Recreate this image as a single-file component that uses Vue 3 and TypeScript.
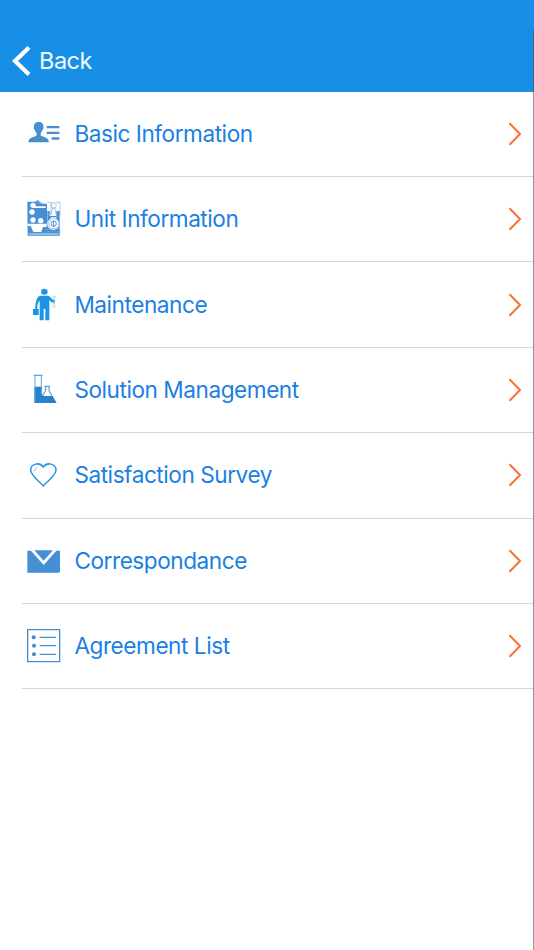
<script setup lang="ts">
interface MenuItem {
  icon: string
  label: string
  viewBox: string
}

const items: MenuItem[] = [
  { icon: 'person', label: 'Basic Information', viewBox: '21 6 132 132' },
  { icon: 'unit', label: 'Unit Information', viewBox: '21 22 132 132' },
  { icon: 'worker', label: 'Maintenance', viewBox: '21 8 132 132' },
  { icon: 'flask', label: 'Solution Management', viewBox: '21 9 132 132' },
  { icon: 'heart', label: 'Satisfaction Survey', viewBox: '21 10 132 132' },
  { icon: 'mail', label: 'Correspondance', viewBox: '21 -4 132 132' },
  { icon: 'list', label: 'Agreement List', viewBox: '21 12 132 132' },
]
</script>

<template>
  <div class="screen">
    <header class="bar">
      <button class="back" type="button">
        <svg class="back-icon" viewBox="0 0 20 32"><path d="M18 2.5 4 16l14 13.5" /></svg>
        <span>Back</span>
      </button>
    </header>
    <nav class="menu">
      <a v-for="item in items" :key="item.label" class="row">
        <svg class="icon" :viewBox="item.viewBox">
          <g v-if="item.icon === 'person'" fill="#478fcf">
            <path d="M71 36c-10 0-15 6-14 15-2 2 0 8 3 9 1 5 3 8 5 10v6c-7 6-24 5-25 21h62c-1-16-18-15-25-21v-6c2-2 4-5 5-10 3-1 5-7 3-9 1-9-4-15-14-15z" />
            <path d="M95 48h38v7H95zM95 65h38v7H95zM110 82h23v7h-23z" />
          </g>
          <g v-else-if="item.icon === 'unit'">
            <path d="M37 36h24l7-4 12 10h16v60h38v36H38z" fill="#478fd3" />
            <path d="M97 64h37v38H97z" fill="#478fd3" />
            <g fill="#fff">
              <circle cx="54" cy="47" r="8" /><circle cx="51" cy="67" r="8" />
              <circle cx="54" cy="91" r="8" /><circle cx="77" cy="93" r="8" />
              <path d="M38 102h57v10H84l-5 15H55l-8-18h-9zM58 50h34v5H58zM100 100l8-17h16v20zM104 64h20v15h-20z" />
              <circle cx="115" cy="103" r="18" />
            </g>
            <g fill="none" stroke="#7bb1e1" stroke-width="2">
              <path d="M64 33l10 2 10 8-18-3zM97 38h11v36H97M123 38h12v42h-11M108 74l4-18h8l3 18M98 84v-9l10-7" />
              <circle cx="116" cy="47" r="8" /><circle cx="116" cy="102" r="15" />
              <path d="M97 118h38v15H97zM100 126h31" stroke-dasharray="4 2" />
            </g>
            <circle cx="116" cy="102" r="8" fill="none" stroke="#478fd3" stroke-width="3" />
            <path d="M116 95v17" stroke="#478fd3" stroke-width="3" />
            <path d="M41 133h89" stroke="#d0e4f5" stroke-width="3" />
          </g>
          <g v-else-if="item.icon === 'worker'">
            <ellipse cx="88" cy="34" rx="10" ry="9" fill="#1b94e5" />
            <path d="M79 46h20c5 0 9 8 15 12l6 1v8c-9 1-13-3-17-7v60H91V86h-5v34H74V61c-6 5-7 15-7 25h4v18H54V86h7c0-16 2-40 18-40z" fill="#1b94e5" />
            <path d="M74 61v27M103 60v27" stroke="#9ad0f4" stroke-width="1" />
            <g fill="none" stroke="#8fcbf3" stroke-width="3">
              <path d="M112 46l5 6 5-6M117 52v20" /><circle cx="117" cy="78" r="4" stroke-dasharray="3 2" />
            </g>
          </g>
          <g v-else-if="item.icon === 'flask'">
            <path d="M58 65h23v22l5 6h27l12 21H58z" fill="#2882cb" />
            <path d="M60 32v78M79 32v58" stroke="#5ba3dc" stroke-width="3" />
            <path d="M56 31h27M88 64h18M92 65v12l-9 14M102 65v12l9 15" fill="none" stroke="#5ba3dc" stroke-width="3.5" />
          </g>
          <g v-else-if="item.icon === 'heart'" fill="none" stroke="#2594e7" stroke-linejoin="round">
            <path d="M85 109C77 98 47 78 47 61c0-19 27-25 38-9 11-16 38-10 38 9 0 17-30 37-38 48z" stroke-width="4.5" />
            <path d="M58 65c0-5 4-9 9-10" stroke-width="3" stroke="#70b9ef" />
          </g>
          <g v-else-if="item.icon === 'mail'" fill="#458fd2">
            <path d="M37 31h11l38 43 38-43h11v62q0 4-4 4H37z" />
            <path d="M58 30h56L86 61z" />
          </g>
          <g v-else fill="none" stroke="#478fd3">
            <path d="M38 29h96v96H38z" stroke-width="4" />
            <path d="M74 52h49M74 77h49M74 103h49" stroke-width="4" />
            <g fill="#3f89d0" stroke="none"><circle cx="56" cy="52" r="6" /><circle cx="57" cy="77" r="6" /><circle cx="57" cy="103" r="6" /></g>
          </g>
        </svg>
        <span class="label">{{ item.label }}</span>
        <svg class="chevron" viewBox="0 0 14 24"><path d="M1.5 1.2 12 12 1.5 22.8" /></svg>
      </a>
    </nav>
    <div class="edge"></div>
  </div>
</template>

<style>
body {
  margin: 0;
  background: #fff;
}
</style>

<style scoped>
.screen {
  position: relative;
  width: 534px;
  height: 950px;
  overflow: hidden;
  background: #fff;
  font-family: Inter, "Liberation Sans", sans-serif;
}
.bar {
  box-sizing: border-box;
  height: 91.7px;
  padding: 44.5px 0 0 11px;
  background: #188fe6;
}
.back {
  display: flex;
  align-items: center;
  gap: 8px;
  height: 32px;
  padding: 0;
  border: 0;
  background: none;
  color: #f4faff;
  font: 400 23.5px/32px Inter, "Liberation Sans", sans-serif;
  letter-spacing: -0.5px;
}
.back-icon {
  width: 20px;
  height: 32px;
  fill: none;
  stroke: #fff;
  stroke-width: 4.2;
}
.row {
  display: flex;
  align-items: center;
  box-sizing: border-box;
  height: 85.38px;
  margin-left: 22px;
  padding-right: 12px;
  border-bottom: 1px solid #d5d5d7;
}
.icon {
  flex: none;
  width: 44px;
  height: 44px;
}
.label {
  flex: 1;
  margin-left: 8.4px;
  color: #1b7fe3;
  font-size: 22.6px;
  line-height: 30px;
  letter-spacing: -0.45px;
  white-space: nowrap;
}
.chevron {
  flex: none;
  width: 14px;
  height: 24px;
  fill: none;
  stroke: #fa7038;
  stroke-width: 2;
}
.edge {
  position: absolute;
  top: 30px;
  right: 0;
  bottom: 0;
  width: 1px;
  background: rgba(70, 70, 75, 0.55);
}
</style>
